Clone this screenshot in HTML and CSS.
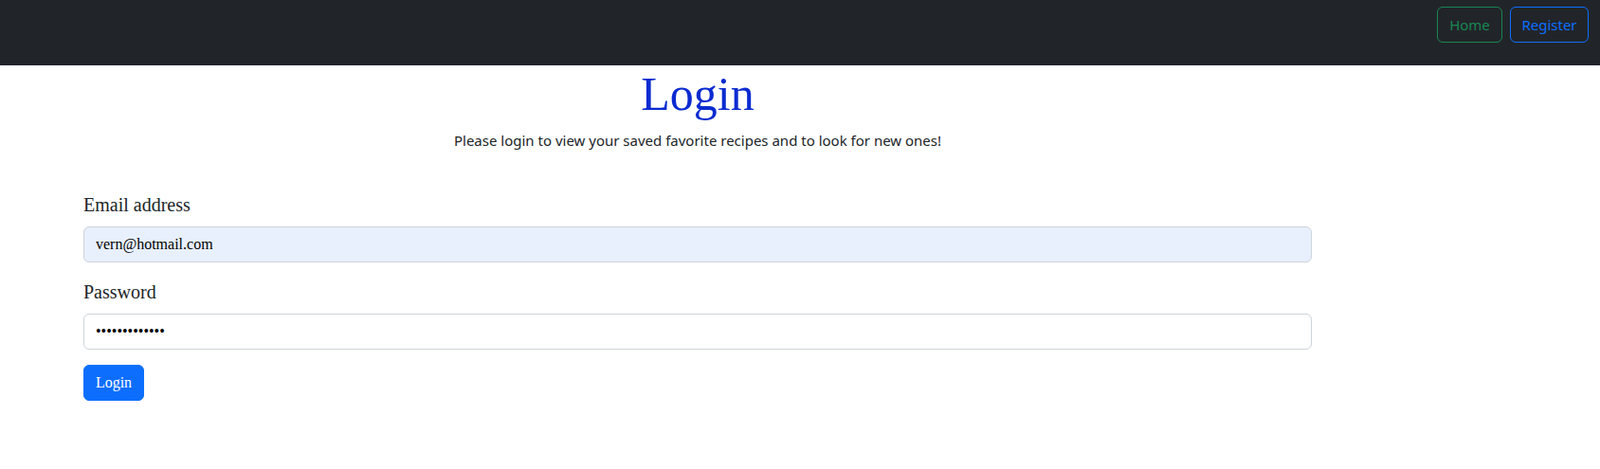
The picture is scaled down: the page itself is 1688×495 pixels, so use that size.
FILE: index.html
```html
<!DOCTYPE html>
<html lang="en">
<head>
<meta charset="utf-8">
<title>Login</title>
<link rel="stylesheet" href="styles.css">
</head>
<body>
<nav class="navbar">
  <div class="nav-actions">
    <a class="btn btn-outline-success" href="#">Home</a>
    <a class="btn btn-outline-primary" href="#">Register</a>
  </div>
</nav>
<main class="content">
  <h1 class="title">Login</h1>
  <p class="lead-text">Please login to view your saved favorite recipes and to look for new ones!</p>
  <form class="login-form">
    <div class="field">
      <label class="form-label" for="email">Email address</label>
      <input class="form-control autofilled" id="email" type="email" value="vern@hotmail.com">
    </div>
    <div class="field">
      <label class="form-label" for="password">Password</label>
      <input class="form-control" id="password" type="password" value="vernpassword1">
    </div>
    <button class="btn-submit" type="button">Login</button>
  </form>
</main>
</body>
</html>
```

FILE: styles.css
```css
* { box-sizing: border-box; }

body {
  margin: 0;
  font-family: "Liberation Serif", "Times New Roman", serif;
  color: #212529;
  background: #fff;
}

.navbar {
  height: 69px;
  background: #212529;
  display: flex;
  justify-content: flex-end;
  align-items: flex-start;
  padding: 7px 12px 0 0;
}

.nav-actions {
  display: flex;
  gap: 8px;
}

.btn {
  display: inline-block;
  font-family: "Noto Sans", "Open Sans", sans-serif;
  font-size: 15px;
  line-height: 24px;
  border: 1px solid;
  border-radius: 6px;
  text-decoration: none;
  height: 38px;
  text-align: center;
  padding: 6px 0;
}

.btn-outline-success { color: #198754; border-color: #198754; width: 69px; }
.btn-outline-primary { color: #0d6efd; border-color: #0d6efd; width: 83px; }

.content {
  width: 1296px;
  margin-left: 88px;
  padding-top: 1px;
}

.title {
  margin: 0 0 8px;
  text-align: center;
  font-size: 50px;
  font-weight: 400;
  line-height: 58px;
  color: #0b2bd0;
}

.lead-text {
  margin: 0 0 41px;
  text-align: center;
  font-family: "Noto Sans", "Open Sans", sans-serif;
  font-size: 15px;
  line-height: 24px;
  color: #212529;
}

.field {
  margin-bottom: 16px;
}

.form-label {
  display: block;
  font-size: 20px;
  line-height: 30px;
  margin-bottom: 8px;
  color: #212529;
}

.form-control {
  display: block;
  width: 100%;
  height: 38px;
  padding: 6px 12px;
  font-family: "Liberation Serif", "Times New Roman", serif;
  font-size: 16px;
  line-height: 24px;
  color: #000;
  background: #fff;
  border: 1px solid #ced4da;
  border-radius: 6px;
  outline: none;
}

.autofilled {
  background: #e8f0fe;
}

.btn-submit {
  display: block;
  height: 38px;
  width: 64px;
  padding: 6px 0;
  font-family: "Liberation Serif", "Times New Roman", serif;
  font-size: 16px;
  line-height: 24px;
  color: #fff;
  background: #0d6efd;
  border: 1px solid #0d6efd;
  border-radius: 6px;
}
```
